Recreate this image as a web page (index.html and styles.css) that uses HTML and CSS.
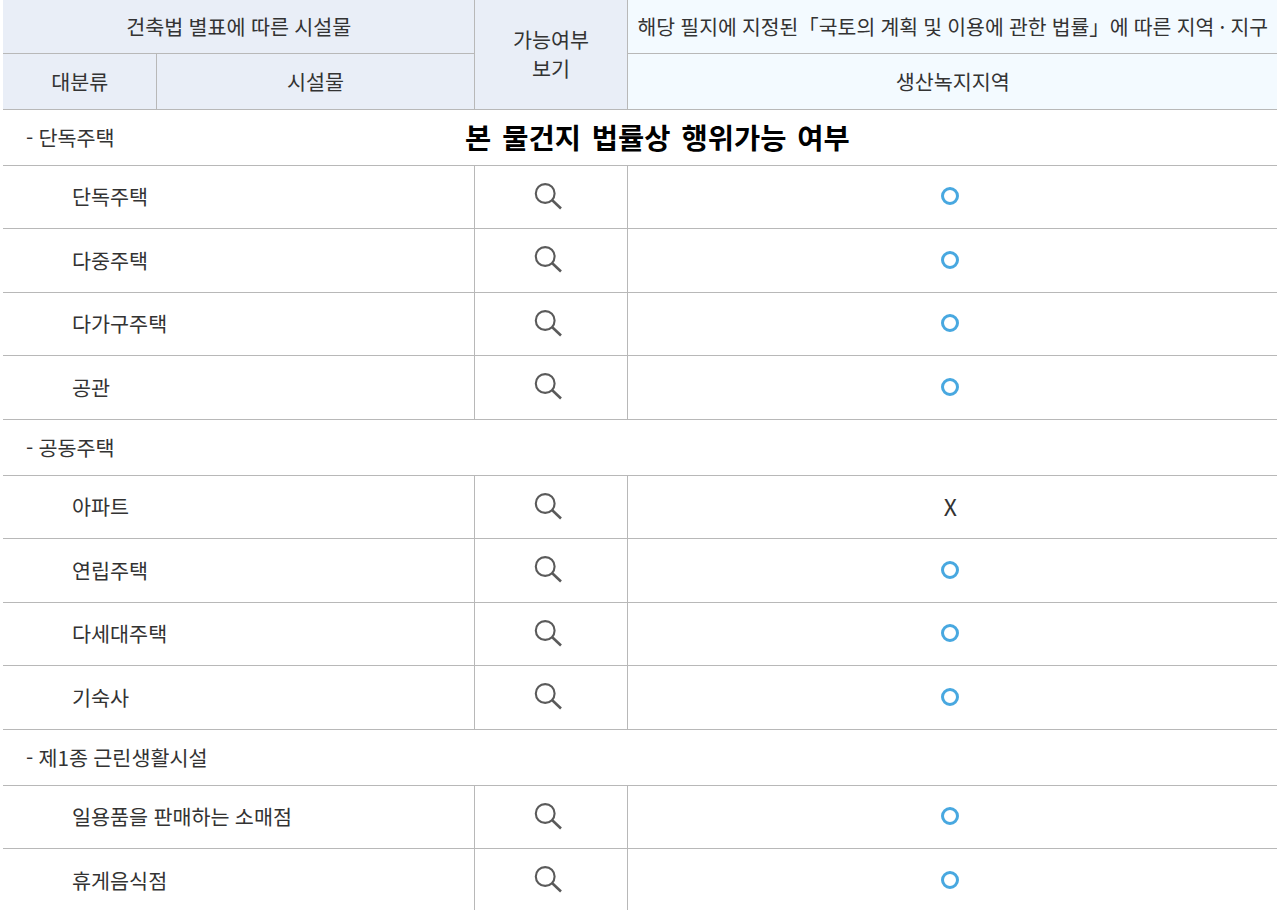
FILE: index.html
```html
<!DOCTYPE html>
<html lang="ko">
<head>
<meta charset="utf-8">
<title>행위가능 여부</title>
<link rel="stylesheet" href="styles.css">
</head>
<body>
<svg class="defs" width="0" height="0" aria-hidden="true">
  <symbol id="search" viewBox="0 0 30 30">
    <circle cx="12.2" cy="11.5" r="9.4" fill="none" stroke="#5a5a5a" stroke-width="2.1"/>
    <path d="M19 18 L28 26.5" fill="none" stroke="#5a5a5a" stroke-width="2.6"/>
  </symbol>
</svg>
<main class="sheet">
  <h1 class="title">본 물건지 법률상 행위가능 여부</h1>
  <table class="grid">
    <colgroup>
      <col class="c1"><col class="c2"><col class="c3"><col class="c4">
    </colgroup>
    <thead>
      <tr class="h1">
        <th colspan="2" class="blue">건축법 별표에 따른 시설물</th>
        <th rowspan="2" class="blue stack">가능여부<br>보기</th>
        <th class="pale long">해당 필지에 지정된「국토의 계획 및 이용에 관한 법률」에 따른 지역 · 지구</th>
      </tr>
      <tr class="h2">
        <th class="blue">대분류</th>
        <th class="blue">시설물</th>
        <th class="pale">생산녹지지역</th>
      </tr>
    </thead>
    <tbody>
      <tr class="group"><td colspan="4">- 단독주택</td></tr>
      <tr class="a"><td colspan="2" class="name">단독주택</td><td class="ic"><svg class="mag"><use href="#search"/></svg></td><td class="ic far"><span class="ok"></span></td></tr>
      <tr class="b"><td colspan="2" class="name">다중주택</td><td class="ic"><svg class="mag"><use href="#search"/></svg></td><td class="ic far"><span class="ok"></span></td></tr>
      <tr class="a"><td colspan="2" class="name">다가구주택</td><td class="ic"><svg class="mag"><use href="#search"/></svg></td><td class="ic far"><span class="ok"></span></td></tr>
      <tr class="b"><td colspan="2" class="name">공관</td><td class="ic"><svg class="mag"><use href="#search"/></svg></td><td class="ic far"><span class="ok"></span></td></tr>
      <tr class="group"><td colspan="4">- 공동주택</td></tr>
      <tr class="a"><td colspan="2" class="name">아파트</td><td class="ic"><svg class="mag"><use href="#search"/></svg></td><td class="ic far x">X</td></tr>
      <tr class="b"><td colspan="2" class="name">연립주택</td><td class="ic"><svg class="mag"><use href="#search"/></svg></td><td class="ic far"><span class="ok"></span></td></tr>
      <tr class="a"><td colspan="2" class="name">다세대주택</td><td class="ic"><svg class="mag"><use href="#search"/></svg></td><td class="ic far"><span class="ok"></span></td></tr>
      <tr class="b"><td colspan="2" class="name">기숙사</td><td class="ic"><svg class="mag"><use href="#search"/></svg></td><td class="ic far"><span class="ok"></span></td></tr>
      <tr class="group"><td colspan="4">- 제1종 근린생활시설</td></tr>
      <tr class="a"><td colspan="2" class="name">일용품을 판매하는 소매점</td><td class="ic"><svg class="mag"><use href="#search"/></svg></td><td class="ic far"><span class="ok"></span></td></tr>
      <tr class="b"><td colspan="2" class="name">휴게음식점</td><td class="ic"><svg class="mag"><use href="#search"/></svg></td><td class="ic far"><span class="ok"></span></td></tr>
    </tbody>
  </table>
</main>
</body>
</html>
```
FILE: styles.css
```css
html, body {
  margin: 0;
  padding: 0;
  background: #fff;
  height: 910px;
  overflow: hidden;
}
body {
  font-family: "Noto Sans CJK KR", "Noto Sans", sans-serif;
  color: #333;
}
.defs { position: absolute; }
.sheet {
  position: relative;
  padding: 0 0 0 3px;
  width: 1277px;
  box-sizing: border-box;
}
.title {
  position: absolute;
  left: 465px;
  top: 116px;
  margin: 0;
  font-size: 28.5px;
  line-height: 42px;
  font-weight: 700;
  word-spacing: 3px;
  color: #000;
  white-space: nowrap;
}
.grid {
  border-collapse: collapse;
  table-layout: fixed;
  width: 1274px;
  font-size: 20.7px;
  word-spacing: -0.5px;
}
.c1 { width: 153px; }
.c2 { width: 318px; }
.c3 { width: 153px; }
.c4 { width: 650px; }
th, td {
  border: 1px solid #b8b8b8;
  padding: 0;
  font-weight: 400;
  text-align: center;
  vertical-align: middle;
  line-height: 32px;
}
tr > :first-child { border-left: 0; }
tr > :last-child { border-right: 0; }
thead tr:first-child th { border-top: 0; }
th { padding: 0 0 1px 1px; }
.blue { background: #e9eef7; }
.pale { background: #f3faff; white-space: nowrap; }
.long { font-size: 20.45px; }
th.stack { line-height: 29px; padding: 0 0 1px 1px; }
.h1 { height: 53px; }
.h2 { height: 56px; }
.group { height: 56px; }
.a { height: 63px; }
.b { height: 64px; }
.group td {
  text-align: left;
  padding: 0 0 1px 23px;
}
td.name {
  text-align: left;
  padding: 0 0 1px 69px;
}
.a td.name { padding-bottom: 2px; }
.ic { line-height: 0; }
.far { padding-right: 4px; }
.mag {
  width: 30px;
  height: 30px;
  display: inline-block;
  vertical-align: middle;
  margin-left: -5px;
}
.ok {
  display: inline-block;
  box-sizing: border-box;
  width: 18px;
  height: 18px;
  border: 3.5px solid #48a8e0;
  border-radius: 50%;
  vertical-align: middle;
}
.a .ok { margin-bottom: 2px; }
.x {
  line-height: 32px;
  font-size: 23px;
  padding-bottom: 2px;
}
```
